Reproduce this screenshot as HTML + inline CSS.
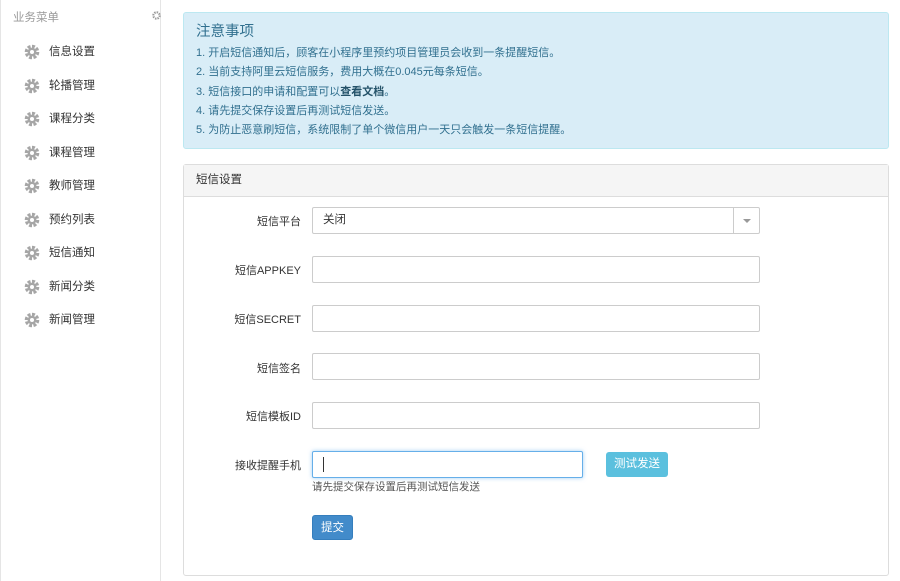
<!DOCTYPE html>
<html><head><meta charset="utf-8"><style>
*{box-sizing:border-box;margin:0;padding:0}
body{width:900px;height:581px;background:#fff;font-family:"Liberation Sans","Noto Sans CJK SC",sans-serif;font-size:12px;color:#333;position:relative;overflow:hidden}
.side{position:absolute;left:0;top:0;width:161px;height:581px;border-right:1px solid #e5e5e5;border-left:1px solid #e5e5e5}
.side .h{position:absolute;left:12px;top:9px;color:#999;font-size:11.5px}
.item{position:absolute;left:24px;height:20px;line-height:20px;font-size:11.5px;color:#333}
.item svg{position:absolute;left:0;top:2px}
.item span{position:absolute;left:25px;white-space:nowrap}
.alert{position:absolute;left:183px;top:12px;width:706px;height:137px;background:#d9edf7;border:1px solid #bce8f1;border-radius:3px;color:#31708f;padding:9px 12px}
.alert h4{font-size:14.5px;font-weight:normal;margin-bottom:2px;line-height:20px}
.alert p{line-height:19.3px;font-size:11px}
.panel{position:absolute;left:183px;top:164px;width:706px;height:412px;border:1px solid #ddd;border-radius:3px}
.panel .ph{height:32px;background:#f5f5f5;border-bottom:1px solid #ddd;padding-left:12px;line-height:31px;font-size:11.5px}
.lbl{position:absolute;right:599px;font-size:11px;white-space:nowrap}
.inp{position:absolute;left:312px;width:448px;height:27px;border:1px solid #ccc;border-radius:2px;background:#fff;font-size:11.5px}
.btn{position:absolute;color:#fff;border-radius:3px;text-align:center;font-size:11.5px}
</style></head><body>
<svg width="0" height="0" style="position:absolute"><defs><g id="gear"><circle cx="8" cy="8" r="5" fill="none" stroke="#a6a6a6" stroke-width="4.6" stroke-dasharray="2.6 1.3"/><circle cx="8" cy="8" r="4.4" fill="#a6a6a6"/><circle cx="8" cy="8" r="2" fill="#fff"/></g></defs></svg>
<div class="side">
<div class="h">业务菜单</div>
<svg style="position:absolute;left:151px;top:11px" width="9" height="9" viewBox="0 0 10 10"><circle cx="5" cy="5" r="3.5" fill="none" stroke="#999" stroke-width="2.4" stroke-dasharray="1.6 1.1"/></svg>
</div>
<div class="item" style="top:42px"><svg width="16" height="16"><use href="#gear"/></svg><span>信息设置</span></div>
<div class="item" style="top:75.5px"><svg width="16" height="16"><use href="#gear"/></svg><span>轮播管理</span></div>
<div class="item" style="top:109px"><svg width="16" height="16"><use href="#gear"/></svg><span>课程分类</span></div>
<div class="item" style="top:142.5px"><svg width="16" height="16"><use href="#gear"/></svg><span>课程管理</span></div>
<div class="item" style="top:176px"><svg width="16" height="16"><use href="#gear"/></svg><span>教师管理</span></div>
<div class="item" style="top:209.5px"><svg width="16" height="16"><use href="#gear"/></svg><span>预约列表</span></div>
<div class="item" style="top:243px"><svg width="16" height="16"><use href="#gear"/></svg><span>短信通知</span></div>
<div class="item" style="top:276.5px"><svg width="16" height="16"><use href="#gear"/></svg><span>新闻分类</span></div>
<div class="item" style="top:310px"><svg width="16" height="16"><use href="#gear"/></svg><span>新闻管理</span></div>
<div class="alert">
<h4>注意事项</h4>
<p>1. 开启短信通知后，顾客在小程序里预约项目管理员会收到一条提醒短信。</p>
<p>2. 当前支持阿里云短信服务，费用大概在0.045元每条短信。</p>
<p>3. 短信接口的申请和配置可以<b style="color:#245269">查看文档</b>。</p>
<p>4. 请先提交保存设置后再测试短信发送。</p>
<p>5. 为防止恶意刷短信，系统限制了单个微信用户一天只会触发一条短信提醒。</p>
</div>
<div class="panel"><div class="ph">短信设置</div></div>
<div class="lbl" style="top:213px">短信平台</div>
<div class="inp" style="top:207px;padding-left:10px;line-height:25px">关闭<div style="position:absolute;right:0;top:0;width:26px;height:25px;border-left:1px solid #ccc"><div style="position:absolute;left:9px;top:11px;border:4px solid transparent;border-top:4px solid #999;border-bottom:0"></div></div></div>
<div class="lbl" style="top:262px">短信APPKEY</div>
<div class="inp" style="top:256px"></div>
<div class="lbl" style="top:311px">短信SECRET</div>
<div class="inp" style="top:305px"></div>
<div class="lbl" style="top:360px">短信签名</div>
<div class="inp" style="top:353px"></div>
<div class="lbl" style="top:408px">短信模板ID</div>
<div class="inp" style="top:402px"></div>
<div class="lbl" style="top:457px">接收提醒手机</div>
<div class="inp" style="top:451px;width:271px;border-color:#66afe9;box-shadow:0 0 4px rgba(102,175,233,.6)"><div style="position:absolute;left:10px;top:5px;width:1px;height:15px;background:#333"></div></div>
<div class="btn" style="left:606px;top:452px;width:62px;height:25px;line-height:25px;background:#5bc0de">测试发送</div>
<div style="position:absolute;left:312px;top:479px;font-size:10.5px;color:#555">请先提交保存设置后再测试短信发送</div>
<div class="btn" style="left:312px;top:515px;width:41px;height:25px;line-height:25px;background:#428bca;border:1px solid #357ebd">提交</div>
</body></html>
